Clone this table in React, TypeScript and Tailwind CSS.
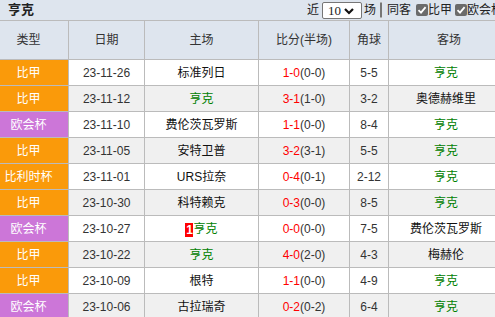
import React from "react";

type Row = {
  type: string;
  date: string;
  home: string;
  score: string;
  half: string;
  corner: string;
  away: string;
  badge?: boolean;
};

const rows: Row[] = [
  { type: "比甲", date: "23-11-26", home: "标准列日", score: "1-0", half: "(0-0)", corner: "5-5", away: "亨克" },
  { type: "比甲", date: "23-11-12", home: "亨克", score: "3-1", half: "(1-0)", corner: "3-2", away: "奥德赫维里" },
  { type: "欧会杯", date: "23-11-10", home: "费伦茨瓦罗斯", score: "1-1", half: "(0-0)", corner: "8-4", away: "亨克" },
  { type: "比甲", date: "23-11-05", home: "安特卫普", score: "3-2", half: "(3-1)", corner: "5-5", away: "亨克" },
  { type: "比利时杯", date: "23-11-01", home: "URS拉奈", score: "0-4", half: "(0-1)", corner: "2-12", away: "亨克" },
  { type: "比甲", date: "23-10-30", home: "科特赖克", score: "0-3", half: "(0-0)", corner: "8-5", away: "亨克" },
  { type: "欧会杯", date: "23-10-27", home: "亨克", score: "0-0", half: "(0-0)", corner: "7-5", away: "费伦茨瓦罗斯", badge: true },
  { type: "比甲", date: "23-10-22", home: "亨克", score: "4-0", half: "(2-0)", corner: "4-3", away: "梅赫伦" },
  { type: "比甲", date: "23-10-09", home: "根特", score: "1-1", half: "(0-0)", corner: "4-9", away: "亨克" },
  { type: "欧会杯", date: "23-10-06", home: "古拉瑞奇", score: "0-2", half: "(0-2)", corner: "6-4", away: "亨克" },
];

const typeColor = (t: string) => (t === "欧会杯" ? "bg-[#cc76d8]" : "bg-[#fa9a0a]");

const Team = ({ name, badge }: { name: string; badge?: boolean }) => (
  <span className={name === "亨克" ? "text-[#008000]" : "text-[#111]"}>
    {badge && (
      <span className="inline-block bg-[#ff0000] text-white font-bold leading-[14px] w-[8px] text-center align-[-1px]">1</span>
    )}
    {name}
  </span>
);

const Check = ({ checked }: { checked: boolean }) =>
  checked ? (
    <span className="w-[12px] h-[12px] rounded-[2px] bg-[#6b6b6b] flex items-center justify-center">
      <svg width="10" height="10" viewBox="0 0 10 10">
        <path d="M1.5 5.2 L4 7.6 L8.6 2.2" stroke="white" strokeWidth="1.8" fill="none" />
      </svg>
    </span>
  ) : (
    <span className="w-[13px] h-[13px] rounded-[3px] bg-white border border-[#767676]" />
  );

const cols = "grid grid-cols-[80px_76px_114px_91px_39px_120px]";

export default function App() {
  return (
    <div
      className="w-[495px] h-[317px] overflow-hidden bg-white text-[12px] text-[#333]"
      style={{ fontFamily: '"Liberation Sans", "Noto Sans CJK SC", sans-serif' }}
    >
      <div className="-ml-[11px] w-[520px]">
        <div className="h-[20px] bg-[#dee5ee] flex items-center">
          <div className="w-[318px] pl-[19px] font-bold text-[13px] text-[#222]">亨克</div>
          <div className="flex items-center text-[#222] whitespace-nowrap">
            <span>近</span>
            <span
              className="ml-[3px] w-[40px] h-[17px] mt-[1px] border border-[#767676] rounded-[2px] bg-white flex items-center pl-[5px] text-[13px] leading-none"
              style={{ fontFamily: '"Liberation Serif", serif' }}
            >
              10
              <svg className="ml-[3px]" width="10" height="8" viewBox="0 0 10 8">
                <path d="M1 2 L5 6 L9 2" stroke="#111" strokeWidth="2.2" fill="none" />
              </svg>
            </span>
            <span className="ml-[2px]">场</span>
            <span className="ml-[4px]"><Check checked={false} /></span>
            <span className="ml-[5px]">同客</span>
            <span className="ml-[5px]"><Check checked /></span>
            <span>比甲</span>
            <span className="ml-[3px]"><Check checked /></span>
            <span>欧会杯</span>
          </div>
        </div>

        <div className={`${cols} h-[40px] border-y border-[#bbb] bg-[#dee5ee] text-[#333]`}>
          {["类型", "日期", "主场", "比分(半场)", "角球", "客场"].map((h) => (
            <div key={h} className="flex items-center justify-center border-r border-[#bbb] last:border-r-0">
              {h}
            </div>
          ))}
        </div>

        {rows.map((r, i) => (
          <div
            key={i}
            className={`${cols} h-[26px] border-b border-[#bbb] ${i % 2 === 1 ? "bg-[#f0f0f0]" : "bg-white"}`}
          >
            <div className={`${typeColor(r.type)} text-white flex items-center justify-center border-r border-[#bbb]`}>
              {r.type}
            </div>
            <div className="flex items-center justify-center border-r border-[#bbb] text-[#333]">{r.date}</div>
            <div className="flex items-center justify-center border-r border-[#bbb]">
              <Team name={r.home} badge={r.badge} />
            </div>
            <div className="flex items-center justify-center border-r border-[#bbb]">
              <span className="text-[#ff0000]">{r.score}</span>
              <span className="text-[#333]">{r.half}</span>
            </div>
            <div className="flex items-center justify-center border-r border-[#bbb] text-[#333]">{r.corner}</div>
            <div className="flex items-center justify-center pr-[6px]">
              <Team name={r.away} />
            </div>
          </div>
        ))}
      </div>
    </div>
  );
}
